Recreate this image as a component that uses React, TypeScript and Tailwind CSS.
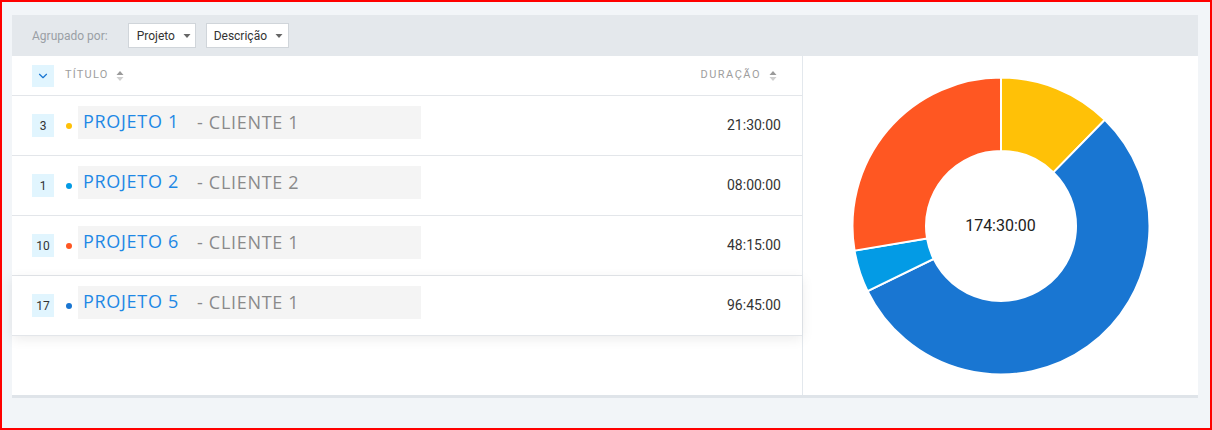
import { ChevronDown } from "lucide-react";

type Row = {
  count: number;
  color: string;
  project: string;
  client: string;
  duration: string;
  hours: number;
  hover?: boolean;
};

const rows: Row[] = [
  { count: 3, color: "#ffc107", project: "PROJETO 1", client: "CLIENTE 1", duration: "21:30:00", hours: 21.5 },
  { count: 1, color: "#039be5", project: "PROJETO 2", client: "CLIENTE 2", duration: "08:00:00", hours: 8 },
  { count: 10, color: "#ff5722", project: "PROJETO 6", client: "CLIENTE 1", duration: "48:15:00", hours: 48.25 },
  { count: 17, color: "#1976d2", project: "PROJETO 5", client: "CLIENTE 1", duration: "96:45:00", hours: 96.75, hover: true },
];

// ordem das fatias no gráfico, a partir do topo no sentido horário
const slices = [rows[0], rows[3], rows[1], rows[2]];

function Caret() {
  return (
    <svg width="8" height="4" viewBox="0 0 8 4" className="ml-2">
      <path d="M0.5 0 L7.5 0 L4 4 Z" fill="#666" />
    </svg>
  );
}

function SortIcon() {
  return (
    <svg width="8" height="10" viewBox="0 0 8 10" className="ml-2">
      <path d="M0.5 4 L7.5 4 L4 0 Z" fill="#9a9a9a" />
      <path d="M0.5 6 L7.5 6 L4 10 Z" fill="#cfcfcf" />
    </svg>
  );
}

function Donut() {
  const cx = 150;
  const cy = 150;
  const ro = 148.5;
  const ri = 75;
  const total = slices.reduce((s, r) => s + r.hours, 0);
  let start = 0;

  const pt = (r: number, a: number) => {
    const rad = (a - 90) * (Math.PI / 180);
    return `${(cx + r * Math.cos(rad)).toFixed(2)} ${(cy + r * Math.sin(rad)).toFixed(2)}`;
  };

  return (
    <div className="relative h-[300px] w-[300px]">
      <svg width="300" height="300" viewBox="0 0 300 300">
        {slices.map((s) => {
          const sweep = (s.hours / total) * 360;
          const end = start + sweep;
          const large = sweep > 180 ? 1 : 0;
          const d = [
            `M ${pt(ro, start)}`,
            `A ${ro} ${ro} 0 ${large} 1 ${pt(ro, end)}`,
            `L ${pt(ri, end)}`,
            `A ${ri} ${ri} 0 ${large} 0 ${pt(ri, start)}`,
            "Z",
          ].join(" ");
          start = end;
          return <path key={s.project} d={d} fill={s.color} stroke="#fff" strokeWidth="2" />;
        })}
      </svg>
      <div className="absolute inset-0 flex items-center justify-center font-['Roboto',sans-serif] text-[16px] text-[#222]">
        174:30:00
      </div>
    </div>
  );
}

export default function App() {
  return (
    <div className="h-[430px] w-[1212px] border-2 border-[#ff0000] bg-[#f2f5f8] pl-[10px] pr-[12px] pt-[13px] font-['Roboto',sans-serif]">
      <div className="flex flex-col border-b-[3px] border-[#dfe4e9] bg-white">
        {/* barra de agrupamento */}
        <div className="flex h-[41px] items-center bg-[#e4e8ec] pl-[20px] text-[12px]">
          <span className="text-[#9a9fa5]">Agrupado por:</span>
          <button className="ml-[20px] flex h-[25px] w-[68px] items-center border border-[#d0d5da] bg-white pl-[8px] text-[#333]">
            Projeto
            <Caret />
          </button>
          <button className="ml-[10px] flex h-[25px] w-[83px] items-center border border-[#d0d5da] bg-white pl-[7px] text-[#333]">
            Descrição
            <Caret />
          </button>
        </div>

        <div className="flex h-[339px]">
          {/* tabela */}
          <div className="w-[791px] border-r border-[#e3e8ed]">
            <div className="flex h-[40px] items-center border-b border-[#e3e6ea] pl-[20px] pr-[25px]">
              <div className="flex h-[22px] w-[22px] items-center justify-center bg-[#e1f5fe]">
                <ChevronDown size={14} strokeWidth={2} color="#1976d2" />
              </div>
              <span className="ml-[11px] text-[11px] tracking-[1.2px] text-[#9e9e9e]">TÍTULO</span>
              <SortIcon />
              <div className="flex-1" />
              <span className="text-[11px] tracking-[1.5px] text-[#9e9e9e]">DURAÇÃO</span>
              <SortIcon />
            </div>

            {rows.map((r) => (
              <div
                key={r.project}
                className={`flex h-[60px] items-center border-b border-[#e3e6ea] pl-[20px] pr-[21px] ${
                  r.hover ? "relative shadow-[0_3px_12px_rgba(0,0,0,0.08)]" : ""
                }`}
              >
                <div className="flex h-[23px] w-[22px] items-center justify-center bg-[#e1f5fe] text-[12px] text-[#333]">
                  {r.count}
                </div>
                <span className="ml-[12px] h-[6px] w-[6px] rounded-full" style={{ backgroundColor: r.color }} />
                <div className="ml-[6px] mt-[-6px] flex h-[33px] w-[343px] items-center bg-[#f4f4f4] pl-[5px] font-['Open_Sans',sans-serif] text-[18px] tracking-[0.7px]">
                  <span className="mt-[-2px] text-[#1e88e5]">{r.project}</span>
                  <span className="ml-[18px] mt-[-1px] text-[#8a8a8a]">- {r.client}</span>
                </div>
                <div className="flex-1" />
                <span className="text-[14px] text-[#333]">{r.duration}</span>
              </div>
            ))}
          </div>

          {/* gráfico */}
          <div className="flex flex-1 items-center justify-center">
            <Donut />
          </div>
        </div>
      </div>
    </div>
  );
}
